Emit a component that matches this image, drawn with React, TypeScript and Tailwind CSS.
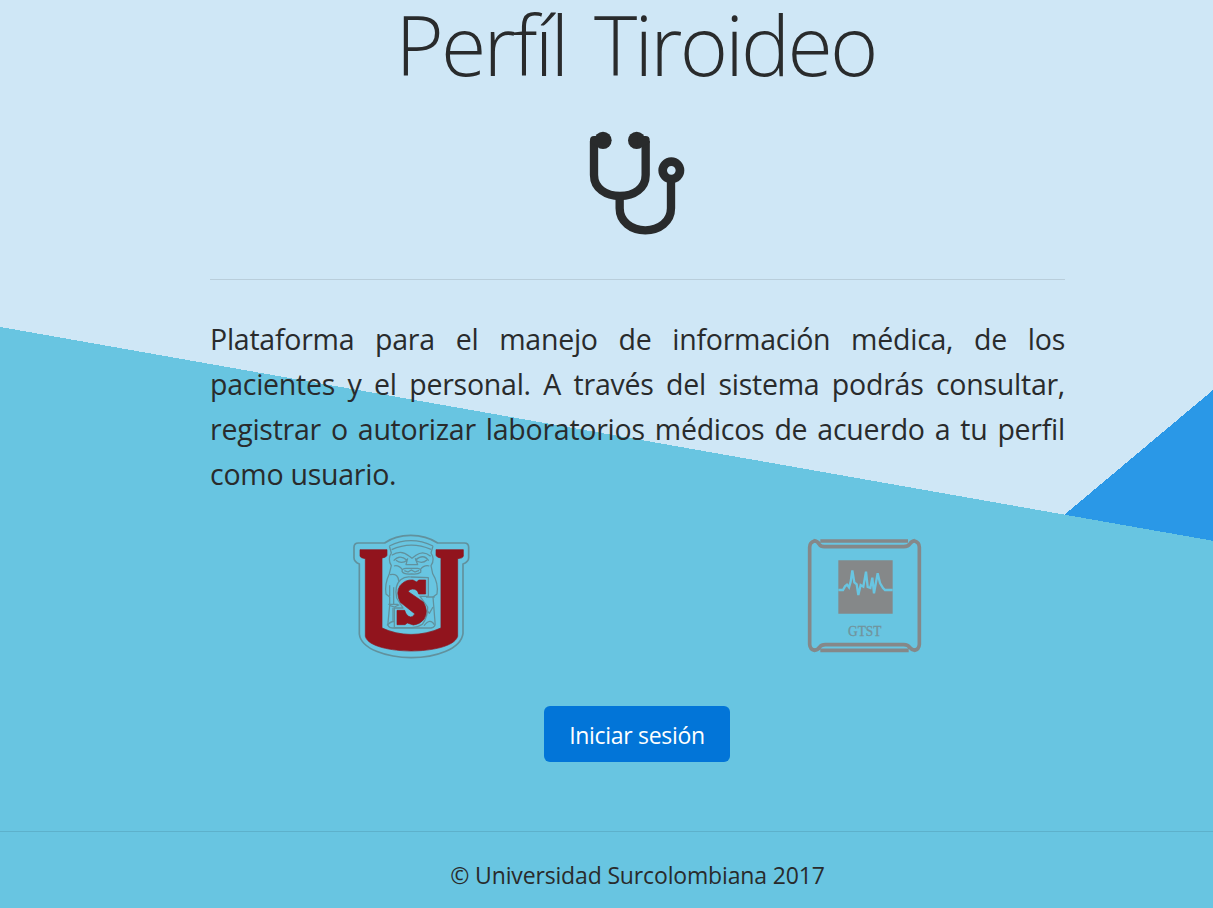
function Stethoscope() {
  return (
    <svg viewBox="0 0 345 375" className="h-[125px] w-[115px]" fill="none" stroke="#292b2c" strokeWidth="25">
      <path d="M42 63V165C42 205 78 228 120 228S197 205 197 165V63" />
      <path d="M119 228V265C119 305 154 331 196 331S273 305 273 265V180" />
      <circle cx="274" cy="151" r="26" strokeWidth="26" />
      <g fill="#292b2c" stroke="none">
        <circle cx="69" cy="61" r="26" />
        <circle cx="170" cy="61" r="26" />
        <path d="M30 68V60Q30 48 42 48H66V80H54ZM209 68V60Q209 48 197 48H173V80H185Z" />
      </g>
    </svg>
  );
}

function UniversityLogo() {
  return (
    <svg viewBox="0 0 405 420" className="h-[140px] w-[135px]" fill="none" stroke="#61919d" strokeWidth="3.8" strokeLinejoin="round">
      <path strokeWidth="5" d="M27 67Q27 54 40 54H119Q150 31 197 31T278 54H358Q371 54 371 67V98Q371 110 354 117V325C348 373 270 398 199 398S48 373 43 327V117Q27 110 27 98Z" />
      <path d="M133 63Q197 31 264 63M140 74Q197 47 258 73M133 63L139 84Q127 102 139 122L133 146Q118 178 123 207L134 216V241L129 293Q126 308 143 309H258Q273 307 270 291L264 216L276 207Q281 175 263 146L258 122Q271 103 258 84L264 63" />
      <path d="M140 91Q168 72 192 93L201 100L213 91Q235 75 257 94M146 107Q164 86 186 106M211 106Q235 84 251 107M153 106Q170 119 187 105M211 105Q230 119 246 105M188 100L183 119H218L211 100M147 123Q160 119 172 134M226 134Q237 119 253 123" />
      <path d="M171 139Q171 130 183 130H218Q230 131 227 142Q219 149 200 147Q175 149 171 139ZM178 137L189 141L199 135L210 141L222 136M135 149Q160 143 162 171M134 181V213M146 187V236M133 241L148 246L163 239M243 216H269M242 251L253 265L264 246M130 238H159M144 248V287M126 301Q149 277 158 303M237 302Q256 278 268 299" />
      <path fill="#68c5e1" d="M198 156Q180 153 167 164Q147 181 155 219L174 249H148V308H198Q216 309 232 298Q249 275 248 246L225 214H250V158Z" />
      <path d="M109 105V309Q197 347 289 309V105" />
      <g fill="#91141d" stroke="#91141d" strokeWidth="2">
        <path d="M45 74H126V91Q124 98 111 99V309Q150 328 198 329Q248 328 288 309V99Q275 98 273 91V74H355V94Q353 100 338 101V334C329 365 256 378 199 378S68 365 61 334V101Q47 99 45 94Z" />
        <path d="M242 165V207H221Q217 192 203 192Q193 192 190 200L235 231Q252 259 237 283Q224 299 205 300L187 294L180 299H156V256H179Q184 274 197 276Q207 275 209 266L166 232Q151 203 165 182Q180 163 204 165L215 171L221 165Z" />
      </g>
    </svg>
  );
}

function GtstLogo() {
  return (
    <svg viewBox="0 0 420 390" className="h-[130px] w-[140px]" fill="none" stroke="#858889" strokeWidth="11">
      <path d="M58 33Q44 37 44 52V343Q45 358 59 361M359 33Q373 37 373 52V343Q372 358 358 361" />
      <path d="M56 32Q68 33 73 43Q77 50 88 50H326Q340 50 345 41Q350 33 360 32M57 361Q69 360 74 351Q79 344 91 344H326Q339 344 345 353Q350 360 360 361M76 33H339M76 361H341" />
      <path d="M130 91H293V251H130Z" fill="#858889" stroke="none" />
      <path d="M130 180H144L150 169L156 164L162 172L167 155L172 121L178 157L185 163L190 195L197 165L205 170L213 125L218 171L226 174L232 143L237 190L248 130L255 159L264 174L270 180H293" stroke="#68c5e1" strokeWidth="7" />
      <text x="209" y="319" textAnchor="middle" textLength="100" lengthAdjust="spacingAndGlyphs" fill="#71949d" stroke="#71949d" strokeWidth="1" className="font-['Liberation_Serif',serif] text-[43px]">GTST</text>
    </svg>
  );
}

export default function App() {
  return (
    <div className="h-[908px] overflow-hidden bg-[#cfe7f6] bg-[linear-gradient(190deg,transparent_532.6px,#68c5e1_532.6px),linear-gradient(140deg,transparent_1078.5px,#2a98e7_1078.5px)] font-['Open_Sans','Noto_Sans',sans-serif] text-[#292b2c]">
      <div className="flex w-[1275px] flex-col">
        <main className="mx-auto flex h-[831px] w-[855px] flex-col items-center">
          <h1 className="h-[120px] pr-[4px] text-[82.5px] leading-[89px] font-light tracking-[-2.8px] whitespace-nowrap [word-spacing:9px]">Perfíl Tiroideo</h1>
          <Stethoscope />
          <hr className="mt-[34px] w-full border-[#b9cedb]" />
          <p className="mt-[37px] w-full text-[28.5px] leading-[45px] font-[370] tracking-[-0.25px]">
            <span className="block [text-align-last:justify]">Plataforma para el manejo de información médica, de los</span>
            <span className="block [text-align-last:justify]">pacientes y el personal. A través del sistema podrás consultar,</span>
            <span className="block [text-align-last:justify]">registrar o autorizar laboratorios médicos de acuerdo a tu perfil</span>
            <span className="block">como usuario.</span>
          </p>
          <div className="mt-[28px] flex w-full justify-between pr-[130px] pl-[135px]">
            <UniversityLogo />
            <div className="pt-[5px]"><GtstLogo /></div>
          </div>
          <button className="mt-[41px] mr-[1px] h-[56px] w-[186px] rounded-[6px] bg-[#0275d8] pt-[3px] text-[23px] tracking-[-0.3px] text-white">Iniciar sesión</button>
        </main>
        <footer className="border-t border-[#5db1cb] pt-[25px] text-center text-[23px] leading-[36px] font-[370] tracking-[-0.15px]">© Universidad Surcolombiana 2017</footer>
      </div>
    </div>
  );
}
